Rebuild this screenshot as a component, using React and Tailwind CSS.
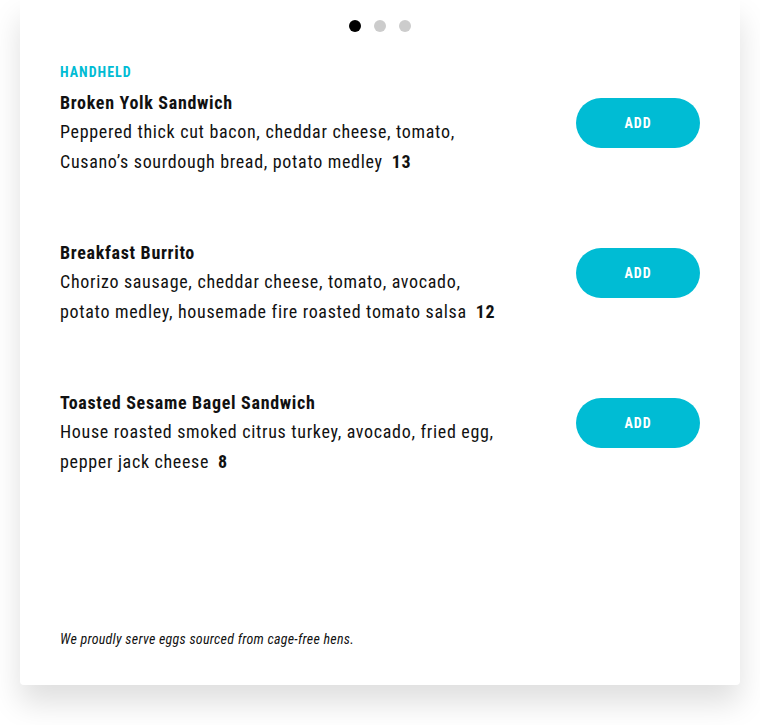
import React from "react";

const items = [
  {
    title: "Broken Yolk Sandwich",
    lines: ["Peppered thick cut bacon, cheddar cheese, tomato,", "Cusano’s sourdough bread, potato medley"],
    price: "13",
  },
  {
    title: "Breakfast Burrito",
    lines: ["Chorizo sausage, cheddar cheese, tomato, avocado,", "potato medley, housemade fire roasted tomato salsa"],
    price: "12",
  },
  {
    title: "Toasted Sesame Bagel Sandwich",
    lines: ["House roasted smoked citrus turkey, avocado, fried egg,", "pepper jack cheese"],
    price: "8",
  },
];

export default function App() {
  return (
    <div
      className="w-[760px] h-[725px] bg-white px-5"
      style={{ fontFamily: "'Roboto Condensed', 'Roboto', 'Liberation Sans', sans-serif" }}
    >
      <div className="h-[685px] bg-white rounded-b-[4px] shadow-[0_18px_30px_rgba(0,0,0,0.13)] px-10 pt-5 flex flex-col">
        <div className="flex justify-center gap-[13px]">
          <span className="w-3 h-3 rounded-full bg-black" />
          <span className="w-3 h-3 rounded-full bg-[#cccccc]" />
          <span className="w-3 h-3 rounded-full bg-[#cccccc]" />
        </div>
        <div className="mt-[30px] text-[14px] leading-5 font-bold text-[#00bcd4] tracking-[1px]">HANDHELD</div>
        <div className="mt-[5px] flex flex-col gap-[60px]">
          {items.map((it) => (
            <div key={it.title} className="flex justify-between items-start">
              <div className="text-[18px] leading-[30px] text-[#111] tracking-[0.68px]">
                <div className="font-bold mt-[1px] -mb-[1px]">{it.title}</div>
                {it.lines.map((l, i) => (
                  <div key={i} className="whitespace-nowrap">
                    {l}
                    {i === it.lines.length - 1 && <span className="font-bold ml-[9px]">{it.price}</span>}
                  </div>
                ))}
              </div>
              <button className="mt-[11px] w-[124px] h-[50px] rounded-full bg-[#00bcd4] text-white font-bold text-[14px] tracking-[1px]">
                ADD
              </button>
            </div>
          ))}
        </div>
        <div className="mt-auto mb-[36px] italic text-[14px] leading-5 text-[#111] tracking-[0.26px]">
          We proudly serve eggs sourced from cage-free hens.
        </div>
      </div>
    </div>
  );
}
